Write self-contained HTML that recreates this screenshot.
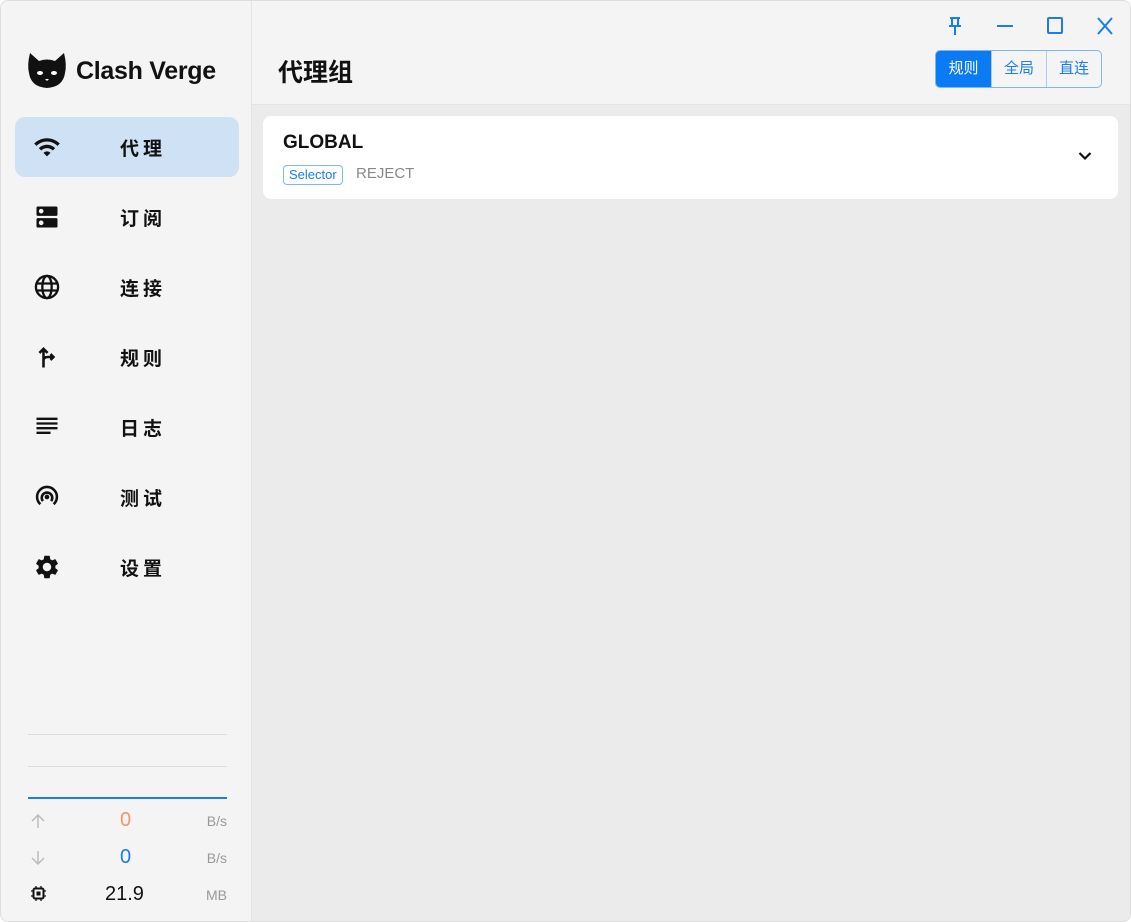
<!DOCTYPE html>
<html><head><meta charset="utf-8"><style>
*{margin:0;padding:0;box-sizing:border-box}
body{width:1131px;height:922px;background:#fff;font-family:"Liberation Sans","Noto Sans CJK SC",sans-serif;overflow:hidden}
.win{position:absolute;left:0;top:0;width:1131px;height:922px;border:1px solid #ddd;border-radius:8px;overflow:hidden;background:#ebebeb}
.side{position:absolute;left:0;top:0;width:251px;height:922px;background:#f4f4f4;border-right:1px solid #e4e4e4}
.logo{position:absolute;left:26px;top:52px;display:flex;align-items:center}
.logo span{font-size:25px;font-weight:bold;margin-left:9px;color:#111;letter-spacing:-0.3px}
.nav{position:absolute;left:14px;width:224px;height:60px;border-radius:10px}
.nav svg{position:absolute;left:18px;top:16px}
.nav b{position:absolute;left:105px;top:17px;font-size:19px;letter-spacing:4px;color:#111;font-weight:bold}
.nav.act{background:#cfe1f5}
.line{position:absolute;left:27px;width:199px;height:1px;background:#ddd}
.stat{position:absolute;left:27px;width:199px;height:30px;font-size:20px}
.hdr{position:absolute;left:251px;top:0;right:0;height:104px;background:#f4f4f4;border-bottom:1px solid #e4e4e4}
.title{position:absolute;left:26px;top:52px;font-size:25px;font-weight:bold;color:#111}
.seg{position:absolute;right:28px;top:49px;display:flex;height:38px;border:1px solid #7fb6f2;border-radius:5px;overflow:hidden}
.seg div{width:55px;text-align:center;line-height:36px;font-size:15px;color:#1a7cf0;border-left:1px solid #a9cdf5}
.seg div:first-child{border:none;background:#0a7bf5;color:#fff}
.card{position:absolute;left:262px;top:115px;width:855px;height:83px;background:#fff;border-radius:8px}
</style></head><body><div class="win">
<div class="side">
 <div class="logo"><svg width="40" height="36" viewBox="0 0 40 36"><path d="M3 0 L12 8 Q20 5 28 8 L37 0 Q40 12 38 20 Q36 34 20 35 Q4 34 2 20 Q0 12 3 0Z" fill="#111"/><ellipse cx="13" cy="20" rx="3" ry="2" fill="#fff"/><ellipse cx="27" cy="20" rx="3" ry="2" fill="#fff"/><path d="M18 26 h4 l-2 2z" fill="#fff"/></svg><span>Clash Verge</span></div>
 <div class="nav act" style="top:116px"><svg width="28" height="28" viewBox="0 0 24 24"><path d="M1 9l2 2c4.970-4.97 13.03-4.97 18 0l2-2C16.93 2.93 7.08 2.93 1 9zm8 8l3 3 3-3c-1.65-1.66-4.34-1.66-6 0zm-4-4l2 2c2.76-2.76 7.24-2.76 10 0l2-2C15.140 9.14 8.87 9.14 5 13z" fill="#111"/></svg><b>代理</b></div>
 <div class="nav" style="top:186px"><svg width="28" height="28" viewBox="0 0 24 24"><path d="M20 13H4c-.55 0-1 .45-1 1v6c0 .55.45 1 1 1h16c.55 0 1-.45 1-1v-6c0-.55-.45-1-1-1zM7 19c-1.1 0-2-.9-2-2s.9-2 2-2 2 .9 2 2-.9 2-2 2zM20 3H4c-.55 0-1 .45-1 1v6c0 .55.45 1 1 1h16c.55 0 1-.45 1-1V4c0-.55-.45-1-1-1zM7 9c-1.1 0-2-.9-2-2s.9-2 2-2 2 .9 2 2-.9 2-2 2z" fill="#111"/></svg><b>订阅</b></div>
 <div class="nav" style="top:256px"><svg width="28" height="28" viewBox="0 0 24 24"><circle cx="12" cy="12" r="9.5" fill="none" stroke="#111" stroke-width="2"/><ellipse cx="12" cy="12" rx="4" ry="9.5" fill="none" stroke="#111" stroke-width="2"/><path d="M3 9h18M3 15h18" stroke="#111" stroke-width="2"/></svg><b>连接</b></div>
 <div class="nav" style="top:326px"><svg width="28" height="28" viewBox="0 0 24 24"><path d="M9 21V5M5.5 8.5L9 5l3.5 3.5M9 15q0-3 4-3h4M15 9.5l2.5 2.5-2.5 2.5" fill="none" stroke="#111" stroke-width="2.2"/></svg><b>规则</b></div>
 <div class="nav" style="top:396px"><svg width="28" height="28" viewBox="0 0 24 24"><path d="M3 5h18M3 9h18M3 13h18M3 17h12" stroke="#111" stroke-width="2"/></svg><b>日志</b></div>
 <div class="nav" style="top:466px"><svg width="28" height="28" viewBox="0 0 24 24"><path d="M6.3 18.2A8.5 8.5 0 1 1 17.7 18.2M8.5 15.5A4.5 4.5 0 1 1 15.5 15.5" fill="none" stroke="#111" stroke-width="2.2"/><circle cx="12" cy="12" r="2" fill="#111"/></svg><b>测试</b></div>
 <div class="nav" style="top:536px"><svg width="28" height="28" viewBox="0 0 24 24"><path d="M19.14 12.94c.04-.3.06-.61.06-.94 0-.32-.02-.64-.07-.94l2.03-1.58a.49.49 0 0 0 .12-.61l-1.92-3.32a.488.488 0 0 0-.59-.22l-2.39.96c-.5-.38-1.03-.7-1.620-.94l-.36-2.54a.484.484 0 0 0-.48-.41h-3.84c-.24 0-.43.17-.47.41l-.36 2.54c-.59.24-1.13.57-1.62.94l-2.39-.96c-.22-.08-.47 0-.59.22L2.74 8.87c-.12.21-.08.47.12.61l2.03 1.58c-.05.3-.09.63-.09.94s.02.64.07.94l-2.03 1.58a.49.49 0 0 0-.12.61l1.92 3.32c.12.22.37.29.59.22l2.39-.96c.5.38 1.03.7 1.62.94l.36 2.54c.05.24.24.41.48.41h3.84c.24 0 .44-.17.47-.41l.36-2.54c.59-.24 1.13-.56 1.62-.94l2.39.96c.22.08.47 0 .59-.22l1.92-3.32c.12-.22.07-.47-.12-.61l-2.01-1.58zM12 15.6c-1.98 0-3.6-1.62-3.6-3.6s1.62-3.6 3.6-3.6 3.6 1.62 3.6 3.6-1.62 3.6-3.6 3.6z" fill="#111"/></svg><b>设置</b></div>
 <div class="line" style="top:733px"></div>
 <div class="line" style="top:765px"></div>
 <div class="line" style="top:796px;background:#1a7cf0;height:2px"></div>
 <div class="stat" style="top:808px"><svg style="position:absolute;left:3px;top:4px" width="14" height="16"><path d="M7 15V2M1 8l6-6 6 6" fill="none" stroke="#bbb" stroke-width="1.5"/></svg><span style="position:absolute;left:92px;color:#f59373">0</span><span style="position:absolute;right:0;top:4px;color:#999;font-size:14px">B/s</span></div>
 <div class="stat" style="top:845px"><svg style="position:absolute;left:3px;top:4px" width="14" height="16"><path d="M7 1v13M1 8l6 6 6-6" fill="none" stroke="#bbb" stroke-width="1.5"/></svg><span style="position:absolute;left:92px;color:#1a7cf0">0</span><span style="position:absolute;right:0;top:4px;color:#999;font-size:14px">B/s</span></div>
 <div class="stat" style="top:882px"><svg style="position:absolute;left:3px;top:3px" width="15" height="15" viewBox="0 0 15 15"><rect x="2.5" y="2.5" width="10" height="10" rx="1.5" fill="none" stroke="#111" stroke-width="2"/><rect x="5.5" y="5.5" width="4" height="4" fill="#111"/><path d="M5 0v2M10 0v2M5 13v2M10 13v2M0 5h2M0 10h2M13 5h2M13 10h2" stroke="#111" stroke-width="1.3"/></svg><span style="position:absolute;left:77px;color:#111">21.9</span><span style="position:absolute;right:0;top:4px;color:#999;font-size:14px">MB</span></div>
</div>
<div class="hdr">
 <svg style="position:absolute;left:695px;top:15px" width="16" height="20" viewBox="0 0 16 20"><path d="M3 2h10M5 2v7M11 2v7M2 10h12M8 10v9" stroke="#1a7cf0" stroke-width="2" fill="none"/></svg>
 <svg style="position:absolute;left:745px;top:23px" width="16" height="4"><path d="M0 2h16" stroke="#1a7cf0" stroke-width="2"/></svg>
 <svg style="position:absolute;left:795px;top:16px" width="16" height="18"><rect x="1" y="1" width="14" height="15" rx="1" fill="none" stroke="#1a7cf0" stroke-width="2"/></svg>
 <svg style="position:absolute;left:845px;top:16px" width="16" height="18"><path d="M1 1l14 16M15 1L1 17" stroke="#1a7cf0" stroke-width="2"/></svg>
 <div class="title">代理组</div>
 <div class="seg"><div>规则</div><div>全局</div><div>直连</div></div>
</div>
<div class="card">
 <div style="position:absolute;left:20px;top:16px;font-size:19px;font-weight:bold;color:#111">GLOBAL</div>
 <div style="position:absolute;left:20px;top:49px;height:20px;padding:0 5px;border:1px solid #7fb6f2;border-radius:4px;font-size:13px;line-height:18px;color:#1a7cf0">Selector</div>
 <div style="position:absolute;left:93px;top:49px;font-size:15px;color:#888">REJECT</div>
 <svg style="position:absolute;right:26px;top:35px" width="14" height="10"><path d="M1.5 2l5.5 5.5 5.5-5.5" fill="none" stroke="#111" stroke-width="2.2"/></svg>
</div>
</div></body></html>
